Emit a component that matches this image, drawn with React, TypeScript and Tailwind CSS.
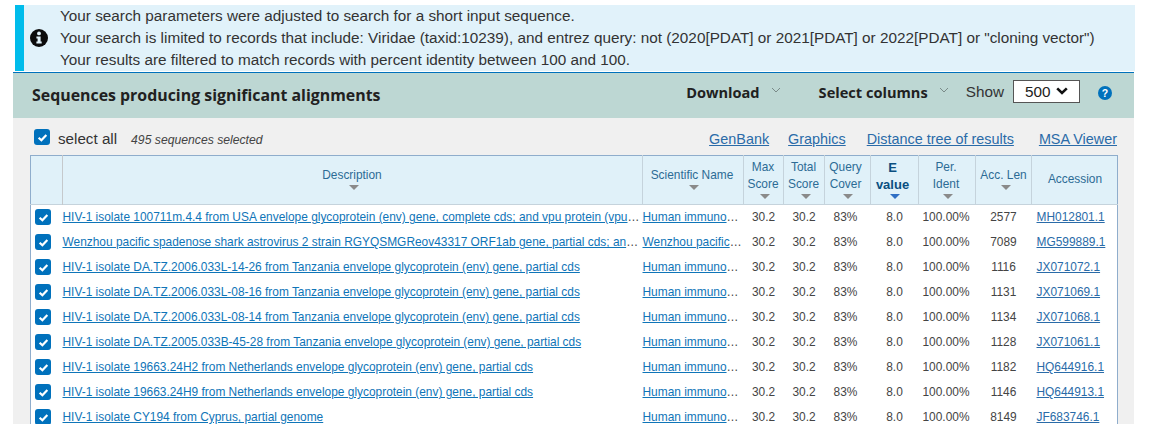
const F = "font-['Liberation_Sans',Arial,sans-serif]";

const HUMAN = "Human immuno";
const rows: { desc: string; more?: boolean; sci: string; len: string; acc: string }[] = [
  { desc: "HIV-1 isolate 100711m.4.4 from USA envelope glycoprotein (env) gene, complete cds; and vpu protein (vpu", more: true, sci: HUMAN, len: "2577", acc: "MH012801.1" },
  { desc: "Wenzhou pacific spadenose shark astrovirus 2 strain RGYQSMGReov43317 ORF1ab gene, partial cds; an", more: true, sci: "Wenzhou pacific", len: "7089", acc: "MG599889.1" },
  { desc: "HIV-1 isolate DA.TZ.2006.033L-14-26 from Tanzania envelope glycoprotein (env) gene, partial cds", sci: HUMAN, len: "1116", acc: "JX071072.1" },
  { desc: "HIV-1 isolate DA.TZ.2006.033L-08-16 from Tanzania envelope glycoprotein (env) gene, partial cds", sci: HUMAN, len: "1131", acc: "JX071069.1" },
  { desc: "HIV-1 isolate DA.TZ.2006.033L-08-14 from Tanzania envelope glycoprotein (env) gene, partial cds", sci: HUMAN, len: "1134", acc: "JX071068.1" },
  { desc: "HIV-1 isolate DA.TZ.2005.033B-45-28 from Tanzania envelope glycoprotein (env) gene, partial cds", sci: HUMAN, len: "1128", acc: "JX071061.1" },
  { desc: "HIV-1 isolate 19663.24H2 from Netherlands envelope glycoprotein (env) gene, partial cds", sci: HUMAN, len: "1182", acc: "HQ644916.1" },
  { desc: "HIV-1 isolate 19663.24H9 from Netherlands envelope glycoprotein (env) gene, partial cds", sci: HUMAN, len: "1146", acc: "HQ644913.1" },
  { desc: "HIV-1 isolate CY194 from Cyprus, partial genome", sci: HUMAN, len: "8149", acc: "JF683746.1" },
];

function Check() {
  return (
    <span className="flex h-4 w-4 items-center justify-center rounded-[3px] bg-[#0071bc]">
      <svg viewBox="0 0 12 12" className="h-[11px] w-[11px]">
        <path d="M1.8 6.2 L4.8 9 L10.2 3.2" fill="none" stroke="#fff" strokeWidth="2.4" />
      </svg>
    </span>
  );
}

function Tri({ blue }: { blue?: boolean }) {
  return (
    <span
      className={`mx-auto mt-[1px] block h-0 w-0 translate-x-[2px] border-x-[5px] border-t-[5px] border-x-transparent ${blue ? "border-t-[#2f6fc4]" : "border-t-[#8a8a8a]"}`}
    />
  );
}

function Chevron() {
  return (
    <svg viewBox="0 0 10 6" className="mb-[5px] h-[6px] w-[10px]">
      <path d="M1 1 L5 5 L9 1" fill="none" stroke="#7a8a88" strokeWidth="1" />
    </svg>
  );
}

function Th({ lines, bold, blue, inset = "" }: { lines: string[]; bold?: boolean; blue?: boolean; inset?: string }) {
  return (
    <th className={`border-r border-[#c5d3dc] p-0 text-center align-middle leading-[17px] ${inset} ${bold ? "text-[13px] font-bold text-[#0a4f80]" : "text-[11.9px] font-normal text-[#2c6b95]"}`}>
      {lines.map((l) => (
        <div key={l}>{l}</div>
      ))}
      <Tri blue={blue} />
    </th>
  );
}

export default function App() {
  return (
    <div className={`${F} h-[434px] w-[1149px] overflow-hidden bg-white pt-[5px] text-[#333]`}>
      <div className="ml-[15px] flex h-[66px] w-[1120px] border-l-[9px] border-[#00bceb] bg-[#e1f2fa]">
        <div className="flex w-[36px] items-center pl-[6px]">
          <svg viewBox="0 0 18 18" className="h-[18px] w-[18px]">
            <circle cx="9" cy="9" r="9" fill="#0c0c0c" />
            <circle cx="9" cy="4.4" r="1.9" fill="#e1f2fa" />
            <path d="M6.4 7.4h4.2v5.2h1.1v2H6.4v-2h1.2V9.4H6.4z" fill="#e1f2fa" />
          </svg>
        </div>
        <div className="text-[15.3px] leading-[22px] text-[#333]">
          <div>Your search parameters were adjusted to search for a short input sequence.</div>
          <div>Your search is limited to records that include: Viridae (taxid:10239), and entrez query: not (2020[PDAT] or 2021[PDAT] or 2022[PDAT] or "cloning vector")</div>
          <div>Your results are filtered to match records with percent identity between 100 and 100.</div>
        </div>
      </div>

      <div className="ml-[13px] mt-px h-[352px] w-[1121px] overflow-hidden bg-[#f0f0f0]">
        <div className="flex h-[46px] items-center border-t border-[#0071bc] bg-[#bdd7d3] pl-[19px]">
          <h2 className="font-['Open_Sans',sans-serif] text-[15.9px] font-bold text-[#212121]">
            Sequences producing significant alignments
          </h2>
          <div className="mb-[6px] ml-auto flex items-center">
            <span className="font-['Open_Sans',sans-serif] text-[14.6px] font-bold text-[#212121]">Download</span>
            <span className="ml-[11px] mr-[38px]"><Chevron /></span>
            <span className="font-['Open_Sans',sans-serif] text-[14.6px] font-bold text-[#212121]">Select columns</span>
            <span className="ml-[11px] mr-[17px]"><Chevron /></span>
            <span className="mr-[9px] text-[15.3px] text-[#333]">Show</span>
            <div className="mb-[3px] flex h-[23px] w-[67px] items-center justify-between border border-[#555] bg-white px-[11px] pt-[2px] text-[15.3px] text-[#212121]">
              500
              <svg viewBox="0 0 12 8" className="mb-[3px] h-[8px] w-[12px]">
                <path d="M1.2 1.4 L6 6 L10.8 1.4" fill="none" stroke="#111" strokeWidth="2.6" />
              </svg>
            </div>
            <svg viewBox="0 0 16 16" className="ml-[18px] mr-[22px] h-[14px] w-[14px]">
              <circle cx="8" cy="8" r="8" fill="#0071bc" />
              <text x="8" y="12.3" textAnchor="middle" fontSize="12" fontWeight="700" fill="#fff" fontFamily="Liberation Sans">?</text>
            </svg>
          </div>
        </div>

        <div className="flex h-[37px] items-center pl-[21px] pr-[17px] pt-[6px]">
          <span className="-mt-[5px]"><Check /></span>
          <span className="ml-[8px] text-[15.2px] text-[#333]">select all</span>
          <span className="ml-[14px] mt-px text-[12.2px] italic text-[#444]">495 sequences selected</span>
          <div className="ml-auto flex text-[14.4px] text-[#2a6ba8]">
            <a className="underline">GenBank</a>
            <a className="ml-[19px] underline">Graphics</a>
            <a className="ml-[21px] underline">Distance tree of results</a>
            <a className="ml-[25px] underline">MSA Viewer</a>
          </div>
        </div>

        <table className="ml-[17px] w-[1087px] table-fixed border-collapse border-x border-t border-[#8fadcc] bg-white text-[11.92px]">
          <colgroup>
            <col className="w-[32px]" />
            <col className="w-[580px]" />
            <col className="w-[101px]" />
            <col className="w-[40px]" />
            <col className="w-[41px]" />
            <col className="w-[46px]" />
            <col className="w-[48px]" />
            <col className="w-[57px]" />
            <col className="w-[56px]" />
            <col className="w-[86px]" />
          </colgroup>
          <thead>
            <tr className="h-[49px] border-b border-[#c5d3dc] bg-[#e0f1f9]">
              <th className="border-r border-[#c5c9cc] p-0" />
              <Th lines={["Description"]} inset="pb-[4px] pr-[1px]" />
              <Th lines={["Scientific Name"]} inset="pb-[4px] pr-[2px]" />
              <Th lines={["Max", "Score"]} inset="pb-[2px] pr-[1px]" />
              <Th lines={["Total", "Score"]} inset="pb-[2px] pr-[1px]" />
              <Th lines={["Query", "Cover"]} inset="pb-[2px] pr-[4px]" />
              <Th lines={["E", "value"]} bold blue inset="pb-[2px] pr-[4px]" />
              <Th lines={["Per.", "Ident"]} inset="pb-[2px] pr-[2px]" />
              <Th lines={["Acc. Len"]} inset="pb-[4px]" />
              <th className="p-0 pl-[1px] text-center align-middle text-[11.9px] font-normal text-[#2c6b95]">Accession</th>
            </tr>
          </thead>
          <tbody>
            {rows.map((r) => (
              <tr key={r.acc} className="h-[25px] text-[#444]">
                <td className="p-0 pl-[4px]"><Check /></td>
                <td className="whitespace-nowrap p-0 pt-[2px]">
                  <a className="text-[#0f75b8] underline">{r.desc}</a>
                  {r.more && "…"}
                </td>
                <td className="whitespace-nowrap p-0 pt-[2px]">
                  <a className="text-[#0f75b8] underline">{r.sci}</a>…
                </td>
                <td className="p-0 pt-[2px] text-center">30.2</td>
                <td className="p-0 pt-[2px] text-center">30.2</td>
                <td className="p-0 pr-[4px] pt-[2px] text-center">83%</td>
                <td className="p-0 pt-[2px] text-center">8.0</td>
                <td className="p-0 pr-[2px] pt-[2px] text-center">100.00%</td>
                <td className="p-0 pt-[2px] text-center">{r.len}</td>
                <td className="p-0 pl-[5px] pt-[2px] text-[#2a6ba8]"><a className="underline">{r.acc}</a></td>
              </tr>
            ))}
          </tbody>
        </table>
      </div>
    </div>
  );
}
